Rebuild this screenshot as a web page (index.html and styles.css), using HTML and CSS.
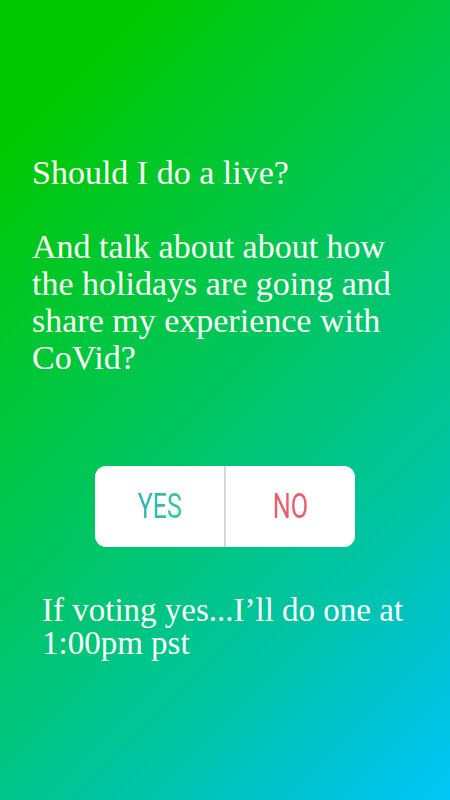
FILE: index.html
```html
<!DOCTYPE html>
<html>
<head>
<meta charset="utf-8">
<link rel="stylesheet" href="styles.css">
</head>
<body>
<div class="story">
  <div class="question">
    <p>Should I do a live?</p>
    <p>And talk about about how the holidays are going and share my experience with CoVid?</p>
  </div>
  <div class="poll">
    <div class="opt yes"><span>YES</span></div>
    <div class="opt no"><span>NO</span></div>
  </div>
  <p class="note">If voting yes...I’ll do one at 1:00pm pst</p>
</div>
</body>
</html>
```
FILE: styles.css
```css
html, body {
  margin: 0;
  padding: 0;
}
.story {
  width: 450px;
  height: 800px;
  box-sizing: border-box;
  background: linear-gradient(135deg, #00c800 0%, #00c800 12%, #00c73e 35%, #00c57e 60%, #00c4a8 75%, #00c3d6 88%, #00c6f6 100%);
  display: flex;
  flex-direction: column;
  padding: 154px 20px 0 32px;
  font-family: "Liberation Serif", "Times New Roman", serif;
  color: #fbfff8;
}
.question {
  font-size: 34px;
  line-height: 37px;
  width: 390px;
}
.question p {
  margin: 0 0 37px 0;
}
.question p:last-child {
  margin: 0;
}
.poll {
  align-self: flex-start;
  margin: 90px 0 0 63px;
  width: 260px;
  height: 81px;
  background: #ffffff;
  border-radius: 11px;
  display: flex;
  overflow: hidden;
}
.opt {
  flex: 1;
  display: flex;
  align-items: center;
  justify-content: center;
  font-family: Roboto, "Liberation Sans", sans-serif;
  font-size: 35px;
  line-height: 1;
}
.opt span {
  display: inline-block;
  transform: scaleX(0.72);
}
.yes {
  border-right: 2px solid #d6d6d6;
}
.yes span {
  background: linear-gradient(90deg, #2ab3b8, #33cc8c);
  -webkit-background-clip: text;
  background-clip: text;
  color: transparent;
}
.no span {
  color: #ee5c6c;
}
.note {
  margin: 47px 0 0 10px;
  font-size: 33px;
  line-height: 33px;
  width: 390px;
}
```
